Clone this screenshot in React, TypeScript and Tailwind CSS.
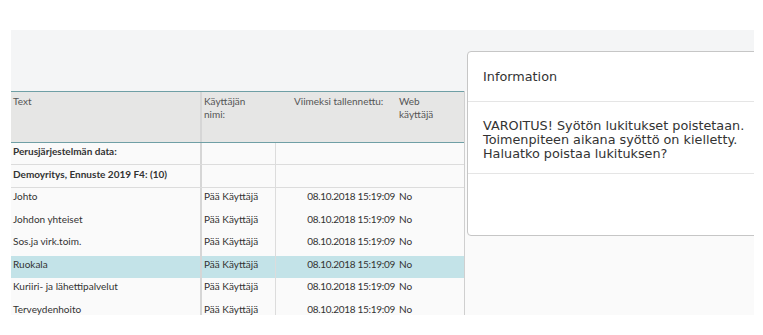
import React from "react";

const rows = [
  "Johto",
  "Johdon yhteiset",
  "Sos.ja virk.toim.",
  "Ruokala",
  "Kuriiri- ja lähettipalvelut",
  "Terveydenhoito",
];

function Table() {
  return (
    <div className="w-[454px] shrink-0 border-r border-[#cfcfcf] bg-[#fafafa] text-[10px] text-[#333] font-['Lato','Liberation_Sans',sans-serif]">
      <div className="flex h-[52px] border-y border-[#6f9fa5] bg-[#e6e6e5] text-[#555] leading-[12.5px]">
        <div className="w-[191px] border-r-2 border-[#d6d6d6] pl-[2px] pt-[3px]">Text</div>
        <div className="w-[74px] pl-[2px] pt-[3px]">
          <div>Käyttäjän</div>
          <div>nimi:</div>
        </div>
        <div className="w-[121px] pl-[18px] pt-[3px]">Viimeksi tallennettu:</div>
        <div className="flex-1 pl-[2px] pt-[3px]">
          <div>Web</div>
          <div>käyttäjä</div>
        </div>
      </div>

      <div className="flex h-[22px] border-b border-[#dcdcdc] font-bold leading-[12.5px]">
        <div className="w-[191px] border-r-2 border-[#d6d6d6] pl-[2px] pt-[2px]">Perusjärjestelmän data:</div>
        <div className="w-[74px] border-r border-[#dcdcdc]" />
        <div className="flex-1" />
      </div>
      <div className="flex h-[23px] border-b border-[#dcdcdc] font-bold leading-[12.5px]">
        <div className="w-[191px] border-r-2 border-[#d6d6d6] pl-[2px] pt-[3px]">Demoyritys, Ennuste 2019 F4: (10)</div>
        <div className="w-[74px] border-r border-[#dcdcdc]" />
        <div className="flex-1" />
      </div>

      {rows.map((r) => (
        <div
          key={r}
          className={`flex h-[22.5px] leading-[12.5px] ${r === "Ruokala" ? "bg-[#c3e3e8]" : ""}`}
        >
          <div className="w-[191px] border-r-2 border-[#d6d6d6] pl-[2px] pt-[2px]">{r}</div>
          <div className="w-[74px] border-r border-[#dcdcdc] pl-[2px] pt-[2px]">Pää Käyttäjä</div>
          <div className="w-[119px] text-right pt-[2px] tracking-[-0.3px]">08.10.2018 15:19:09</div>
          <div className="flex-1 pl-[4px] pt-[2px]">No</div>
        </div>
      ))}
    </div>
  );
}

function Modal() {
  return (
    <div className="absolute left-[456px] top-[21px] w-[330px] h-[185px] rounded-[4px] border border-[#c6c6c6] bg-white text-[#333] font-['DejaVu_Sans',sans-serif] text-[12.8px] flex flex-col">
      <div className="h-[50px] border-b border-[#e5e5e5] pl-[15px] flex items-center">Information</div>
      <div className="h-[72px] border-b border-[#e5e5e5] pl-[15px] pt-[17px] leading-[14px]">
        <div>VAROITUS! Syötön lukitukset poistetaan.</div>
        <div>Toimenpiteen aikana syöttö on kielletty.</div>
        <div>Haluatko poistaa lukituksen?</div>
      </div>
      <div className="flex-1" />
    </div>
  );
}

export default function App() {
  return (
    <div className="w-[763px] h-[335px] bg-white overflow-hidden pt-[30px] pl-[11px]">
      <div className="relative w-[743px] h-[285px] bg-[#f4f5f6] flex flex-col overflow-hidden">
        <div className="h-[61px] shrink-0" />
        <div className="flex flex-1 min-h-0">
          <Table />
          <div className="flex-1 bg-[#fafafa]" />
        </div>
        <Modal />
      </div>
    </div>
  );
}
